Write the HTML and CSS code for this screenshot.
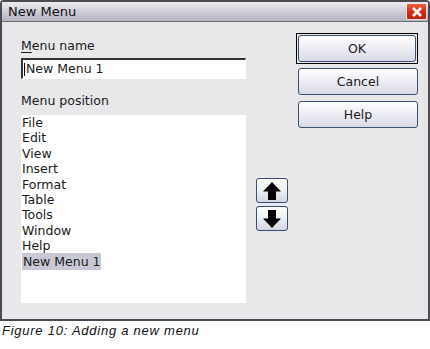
FILE: index.html
```html
<!DOCTYPE html>
<html>
<head>
<meta charset="utf-8">
<link rel="stylesheet" href="styles.css">
</head>
<body>
<div class="window">
  <div class="titlebar">
    <span class="title">New Menu</span>
    <span class="close"><svg width="12" height="10" viewBox="0 0 12 10"><path d="M2 1 L10 9 M10 1 L2 9" stroke="#fff" stroke-width="2.6"/></svg></span>
  </div>
  <div class="content">
    <div class="leftcol">
      <div class="label"><u>M</u>enu name</div>
      <div class="field"><span class="caret"></span>New Menu 1</div>
      <div class="label label2">Menu position</div>
      <div class="list">
        <div class="item">File</div>
        <div class="item">Edit</div>
        <div class="item">View</div>
        <div class="item">Insert</div>
        <div class="item">Format</div>
        <div class="item">Table</div>
        <div class="item">Tools</div>
        <div class="item">Window</div>
        <div class="item">Help</div>
        <div class="item"><span class="sel">New Menu 1</span></div>
      </div>
    </div>
    <div class="arrows">
      <div class="abtn"><svg width="20" height="20" viewBox="0 0 20 20"><path d="M10 1 L19 10.5 L14 10.5 L14 19 L6 19 L6 10.5 L1 10.5 Z" fill="#000"/></svg></div>
      <div class="abtn"><svg width="20" height="20" viewBox="0 0 20 20"><path d="M10 19 L19 9.5 L14 9.5 L14 1 L6 1 L6 9.5 L1 9.5 Z" fill="#000"/></svg></div>
    </div>
    <div class="buttons">
      <div class="default"><div class="btn">OK</div></div>
      <div class="btn">Cancel</div>
      <div class="btn">Help</div>
    </div>
  </div>
</div>
<div class="caption">Figure 10: Adding a new menu</div>
</body>
</html>
```
FILE: styles.css
```css
html, body {
  margin: 0;
  padding: 0;
  background: #ffffff;
}
body {
  width: 430px;
  height: 349px;
  font-family: "DejaVu Sans", sans-serif;
  font-size: 12.5px;
  color: #1a1a1a;
}
.window {
  box-sizing: border-box;
  width: 430px;
  height: 321px;
  border: 2px solid #4a4a50;
  border-top-left-radius: 4px;
  border-top-right-radius: 4px;
  background: #e8e8ea;
  display: flex;
  flex-direction: column;
}
.titlebar {
  height: 19px;
  flex: none;
  display: flex;
  align-items: center;
  justify-content: space-between;
  background: linear-gradient(#ececf0, #c8c8d2 60%, #b4b4c2);
  border-bottom: 1px solid #6a6a78;
}
.title {
  padding-left: 6px;
  font-size: 13px;
  color: #111;
}
.close {
  width: 21px;
  height: 17px;
  margin-right: 1px;
  box-sizing: border-box;
  border: 1px solid #f0e0e0;
  border-radius: 2px;
  background: linear-gradient(#f06040, #d82c14 50%, #c02010);
  display: flex;
  align-items: center;
  justify-content: center;
}
.content {
  flex: 1;
  display: flex;
}
.leftcol {
  width: 225px;
  margin-left: 19px;
  padding-top: 16px;
  display: flex;
  flex-direction: column;
}
.label {
  height: 15px;
  line-height: 15px;
}
.label u {
  text-decoration: underline;
  text-underline-offset: 2px;
}
.field {
  margin-top: 5px;
  height: 21px;
  box-sizing: border-box;
  background: #fff;
  border-top: 2px solid #333;
  border-left: 2px solid #333;
  border-right: 1px solid #fff;
  border-bottom: 1px solid #fff;
  line-height: 18px;
  padding-left: 1px;
  display: flex;
  align-items: center;
}
.caret {
  width: 1px;
  height: 13px;
  background: #000;
  margin-right: 1px;
}
.label2 {
  margin-top: 14px;
}
.list {
  margin-top: 7px;
  height: 188px;
  background: #fff;
  padding-top: 0px;
  padding-left: 1px;
  box-sizing: border-box;
}
.item {
  height: 15.4px;
  line-height: 15.4px;
  white-space: nowrap;
}
.sel {
  background: #c9c9d6;
  padding: 1px;
}
.arrows {
  margin-left: 10px;
  width: 32px;
  padding-top: 156px;
  display: flex;
  flex-direction: column;
  gap: 3px;
}
.abtn {
  height: 25px;
  box-sizing: border-box;
  border: 1px solid #35507a;
  border-radius: 3px;
  background: linear-gradient(#ffffff, #eeeef4 50%, #d6d6e2);
  display: flex;
  align-items: center;
  justify-content: center;
}
.buttons {
  margin-left: 8px;
  width: 122px;
  padding-top: 11px;
  display: flex;
  flex-direction: column;
  gap: 4px;
}
.default {
  border: 1px solid #000;
  height: 31px;
  box-sizing: border-box;
  padding: 1px;
  display: flex;
}
.btn {
  margin-left: 2px;
  height: 27px;
  box-sizing: border-box;
  border: 1px solid #3a5070;
  border-radius: 3px;
  background: linear-gradient(#ffffff, #f0f0f6 40%, #dadae6);
  display: flex;
  align-items: center;
  justify-content: center;
  font-size: 12.5px;
}
.default .btn {
  flex: 1;
  height: auto;
  margin-left: 0;
}
.buttons > .btn + .btn {
  margin-top: 2px;
}
.caption {
  margin-top: 2px;
  padding-left: 2px;
  font-family: "Liberation Sans", Arial, sans-serif;
  font-style: italic;
  font-size: 13px;
  letter-spacing: 0.75px;
  color: #111;
}
```
